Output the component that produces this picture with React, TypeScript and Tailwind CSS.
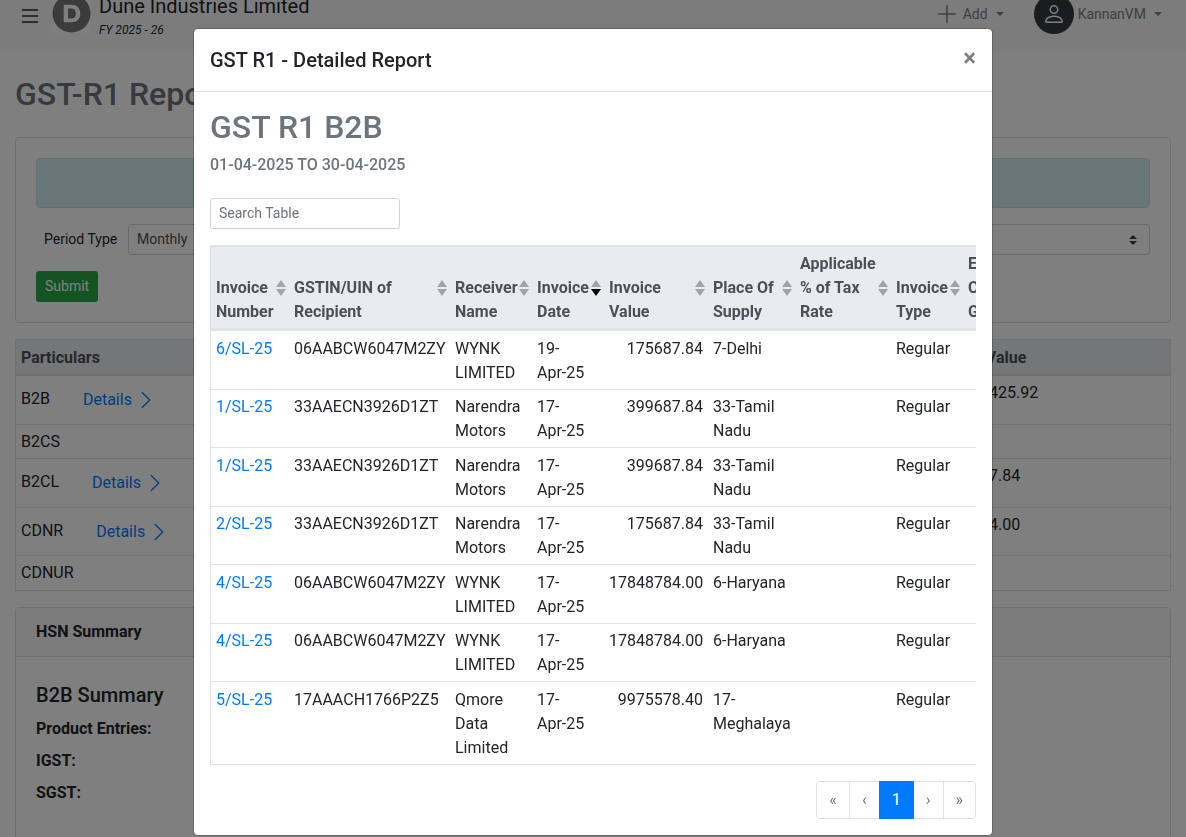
import React from "react";
import { BsChevronRight, BsList, BsPerson, BsPlusLg } from "react-icons/bs";

type SortState = "none" | "desc";

const columns: { label: string; width: string; sort: SortState }[] = [
  { label: "Invoice Number", width: "w-[78px]", sort: "none" },
  { label: "GSTIN/UIN of Recipient", width: "w-[161px]", sort: "none" },
  { label: "Receiver Name", width: "w-[82px]", sort: "none" },
  { label: "Invoice Date", width: "w-[72px]", sort: "desc" },
  { label: "Invoice Value", width: "w-[104px]", sort: "none" },
  { label: "Place Of Supply", width: "w-[87px]", sort: "none" },
  { label: "Applicable % of Tax Rate", width: "w-[96px]", sort: "none" },
  { label: "Invoice Type", width: "w-[72px]", sort: "none" },
  { label: "E-Commerce GSTIN", width: "w-[108px]", sort: "none" },
];

const invoices = [
  ["6/SL-25", "06AABCW6047M2ZY", "WYNK LIMITED", "19", "Apr-25", "175687.84", "7-Delhi"],
  ["1/SL-25", "33AAECN3926D1ZT", "Narendra Motors", "17", "Apr-25", "399687.84", "33-Tamil Nadu"],
  ["1/SL-25", "33AAECN3926D1ZT", "Narendra Motors", "17", "Apr-25", "399687.84", "33-Tamil Nadu"],
  ["2/SL-25", "33AAECN3926D1ZT", "Narendra Motors", "17", "Apr-25", "175687.84", "33-Tamil Nadu"],
  ["4/SL-25", "06AABCW6047M2ZY", "WYNK LIMITED", "17", "Apr-25", "17848784.00", "6-Haryana"],
  ["4/SL-25", "06AABCW6047M2ZY", "WYNK LIMITED", "17", "Apr-25", "17848784.00", "6-Haryana"],
  ["5/SL-25", "17AAACH1766P2Z5", "Qmore Data Limited", "17", "Apr-25", "9975578.40", "17-Meghalaya"],
];

const particulars = [
  { name: "B2B", details: true, value: "4682399425.92" },
  { name: "B2CS", details: false, value: "" },
  { name: "B2CL", details: true, value: "33175687.84" },
  { name: "CDNR", details: true, value: "17848784.00" },
  { name: "CDNUR", details: false, value: "" },
];

function SortIcon({ state }: { state: SortState }) {
  return (
    <svg viewBox="0 0 10 16" className="h-4 w-[10px] shrink-0 self-center" aria-hidden="true">
      <path d="M0 7 5 0l5 7z" fill="#a2a5a7" />
      <path d="M0 9h10l-5 7z" fill={state === "desc" ? "#000" : "#a2a5a7"} />
    </svg>
  );
}

function Caret() {
  return (
    <svg viewBox="0 0 8 4" className="h-1 w-2" aria-hidden="true">
      <path d="M0 0h8L4 4z" fill="currentColor" />
    </svg>
  );
}

function TopBar() {
  return (
    <header className="-mt-6 flex h-[75px] items-center bg-[#f8f8f8] pr-6 pl-[18px]">
      <button type="button" aria-label="Toggle menu" className="mt-1 mr-[10px] text-[#212529]">
        <BsList className="size-6" />
      </button>
      <svg viewBox="0 0 40 40" className="size-[39px] bg-white" aria-hidden="true">
        <circle cx="20" cy="20" r="19.5" fill="#767676" />
        <path
          fillRule="evenodd"
          fill="#fff"
          d="M12 11h8c5.500 0 9 3.500 9 9s-3.500 9-9 9h-8zM16.500 14.800v10.400h3.300c3 0 4.700-1.900 4.700-5.200s-1.700-5.200-4.700-5.200z"
        />
      </svg>
      <div className="mt-2 ml-2 text-[#212529]">
        <p className="text-xl leading-6">Dune Industries Limited</p>
        <p className="text-xs leading-6 italic">FY 2025 - 26</p>
      </div>
      <nav className="ml-auto flex items-center text-sm text-[#7f7f7f]">
        <button type="button" className="flex items-center">
          <BsPlusLg className="mr-1 size-6" />
          Add
          <span className="ml-2">
            <Caret />
          </span>
        </button>
        <button type="button" className="ml-[30px] flex items-center gap-1">
          <span className="flex size-10 items-center justify-center rounded-full bg-[#343a40] text-white">
            <BsPerson className="size-6" />
          </span>
          KannanVM
          <span className="ml-1">
            <Caret />
          </span>
        </button>
      </nav>
    </header>
  );
}

function FilterCard() {
  return (
    <section className="rounded border border-[#dfdfdf] p-5">
      <div className="h-[50px] rounded border border-[#bee5eb] bg-[#d1ecf1]" />
      <form className="mt-4 mb-0" onSubmit={(e) => e.preventDefault()}>
        <div className="flex items-center">
          <label htmlFor="period" className="w-[92px] shrink-0 pb-0.5 pl-2 text-sm">
            Period Type
          </label>
          <div className="relative flex-1">
            <select
              id="period"
              className="h-[31px] w-full appearance-none rounded border border-[#ced4da] bg-white pb-0.5 pl-2 text-sm text-[#495057]"
            >
              <option>Monthly</option>
              <option>Quarterly</option>
            </select>
            <svg
              viewBox="0 0 8 10"
              className="pointer-events-none absolute top-[11px] right-[13px] h-[10px] w-2"
              aria-hidden="true"
            >
              <path d="M4 0 0 4h8zM0 6l4 4 4-4z" fill="#343a40" />
            </svg>
          </div>
        </div>
        <button
          type="submit"
          className="mt-4 block h-[31px] rounded-[3px] bg-[#28a745] px-[9px] pb-0.5 text-sm text-white"
        >
          Submit
        </button>
      </form>
    </section>
  );
}

function ParticularsTable() {
  return (
    <table className="mt-4 w-full table-fixed border-separate border-spacing-0 border border-t-0 border-[#dee2e6] text-left">
      <thead>
        <tr className="bg-[#e9ecef] text-[#495057] [&>th]:border-t [&>th]:border-b-2 [&>th]:border-[#dee2e6] [&>th]:px-[5px] [&>th]:pt-1.5 [&>th]:pb-1">
          <th>Particulars</th>
          <th className="w-[249px]">Taxable Value</th>
        </tr>
      </thead>
      <tbody>
        {particulars.map((row) => (
          <tr
            key={row.name}
            className="even:[&>td]:pb-1 [&>td]:border-b [&>td]:border-[#dee2e6] [&>td]:p-[5px] [&>td]:align-top last:[&>td]:border-b-0"
          >
            <td>
              {row.name}
              {row.details && (
                <button
                  type="button"
                  className="ml-[21px] inline-flex h-[38px] items-center gap-1 px-3 align-middle text-[#007bff]"
                >
                  Details
                  <BsChevronRight className="size-5" />
                </button>
              )}
            </td>
            <td>{row.value}</td>
          </tr>
        ))}
      </tbody>
    </table>
  );
}

function HsnCard() {
  return (
    <section className="mt-4 rounded border border-[#dfdfdf]">
      <h2 className="border-b border-[#dfdfdf] bg-[#f7f7f7] px-5 py-3 font-bold">HSN Summary</h2>
      <div className="p-5">
        <h3 className="mt-1 mb-2 text-xl leading-7 font-medium">B2B Summary</h3>
        <div className="flex flex-col gap-2 font-bold">
          <p>Product Entries:</p>
          <p>IGST:</p>
          <p>SGST:</p>
        </div>
        <div className="mt-8 h-10 border-t border-[#dee2e6]" />
      </div>
    </section>
  );
}

function InvoiceTable() {
  return (
    <div className="mt-4 overflow-x-auto [scrollbar-width:none]">
      <table className="w-[861px] table-fixed border-separate border-spacing-0 border-l border-[#dee2e6] text-left">
        <thead>
          <tr className="bg-[#e9ecef] text-[#495057]">
            {columns.map((col) => (
              <th
                key={col.label}
                className={`${col.width} border-t-2 border-b-3 border-[#dee2e6] pt-[5px] pr-[3px] pb-1 pl-[5px]`}
              >
                <div className="flex min-h-[72px] items-end justify-between">
                  <span>{col.label}</span>
                  <SortIcon state={col.sort} />
                </div>
              </th>
            ))}
          </tr>
        </thead>
        <tbody>
          {invoices.map(([no, gstin, name, day, month, value, place], i) => (
            <tr
              key={i}
              className="odd:[&>td]:pt-1.5 [&>td]:border-b [&>td]:border-[#dee2e6] [&>td]:px-[5px] [&>td]:pt-[5px] [&>td]:pb-1 [&>td]:align-top"
            >
              <td>
                <a href="#invoice" className="text-[#007bff]">
                  {no}
                </a>
              </td>
              <td className="whitespace-nowrap">{gstin}</td>
              <td>{name}</td>
              <td>
                {day}-<wbr />
                <span className="whitespace-nowrap">{month}</span>
              </td>
              <td className="text-right">{value}</td>
              <td>{place}</td>
              <td />
              <td>Regular</td>
              <td />
            </tr>
          ))}
        </tbody>
      </table>
    </div>
  );
}

function Pagination() {
  const item = "-ml-px h-[38px] border px-3";
  const idle = "border-[#dee2e6] text-[#6c757d]";
  return (
    <nav aria-label="Pages" className="mt-4 flex justify-end">
      <button type="button" aria-label="First page" className={`${item} ${idle} rounded-l`}>
        «
      </button>
      <button type="button" aria-label="Previous page" className={`${item} ${idle}`}>
        ‹
      </button>
      <button type="button" className={`${item} z-10 border-[#007bff] bg-[#007bff] text-white`}>
        1
      </button>
      <button type="button" aria-label="Next page" className={`${item} ${idle}`}>
        ›
      </button>
      <button type="button" aria-label="Last page" className={`${item} ${idle} rounded-r`}>
        »
      </button>
    </nav>
  );
}

function ReportDialog() {
  return (
    <div className="fixed inset-0 overflow-y-auto bg-black/50 pt-7 [scrollbar-width:none]">
      <div
        role="dialog"
        aria-modal="true"
        aria-labelledby="report-title"
        className="mx-auto max-w-[800px] rounded-[5px] border border-black/20 bg-white bg-clip-padding"
      >
        <div className="flex items-start justify-between border-b border-[#dee2e6] p-4">
          <h2 id="report-title" className="text-xl leading-[30px] font-medium">
            GST R1 - Detailed Report
          </h2>
          <button type="button" aria-label="Close" className="text-2xl leading-[26px] font-bold text-black/50">
            ×
          </button>
        </div>
        <div className="p-4">
          <h3 className="text-[32px] leading-[38px] font-medium text-[#6c757d]">GST R1 B2B</h3>
          <p className="mt-2 leading-[22px] font-medium text-[#6c757d]">01-04-2025 TO 30-04-2025</p>
          <input
            type="search"
            aria-label="Search Table"
            placeholder="Search Table"
            className="mt-[22px] block h-[31px] w-[190px] rounded-[3px] border border-[#ced4da] px-2 pb-0.5 text-sm placeholder:text-[#6c757d]"
          />
          <InvoiceTable />
          <Pagination />
        </div>
      </div>
    </div>
  );
}

export default function App() {
  return (
    <div className="h-screen overflow-hidden bg-white font-[Roboto,sans-serif] text-base text-[#212529]">
      <TopBar />
      <main className="px-[15px] pt-6">
        <h1 className="mb-6 text-[32px] leading-[38px] font-medium text-[#6c757d]">GST-R1 Report</h1>
        <FilterCard />
        <ParticularsTable />
        <HsnCard />
      </main>
      <ReportDialog />
    </div>
  );
}
